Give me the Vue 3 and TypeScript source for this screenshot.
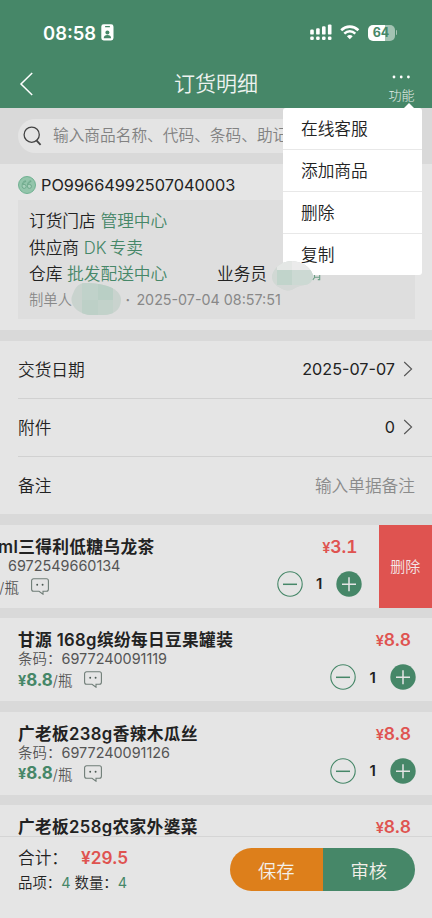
<script setup lang="ts">
interface Product {
  name: string
  code: string
  price: string
  unit: string
  qty: number
  open?: boolean
}

const menu: string[] = ['在线客服', '添加商品', '删除', '复制']

const products: Product[] = [
  { name: '500ml三得利低糖乌龙茶', code: '6972549660134', price: '3.1', unit: '瓶', qty: 1, open: true },
  { name: '甘源 168g缤纷每日豆果罐装', code: '6977240091119', price: '8.8', unit: '瓶', qty: 1 },
  { name: '广老板238g香辣木瓜丝', code: '6977240091126', price: '8.8', unit: '瓶', qty: 1 },
]
const lastProduct = { name: '广老板258g农家外婆菜', price: '8.8' }
</script>

<template>
  <div class="screen">
    <header class="header">
      <div class="status">
        <div class="clock">
          <span class="time">08:58</span>
          <svg class="badge" width="13" height="17" viewBox="0 0 13 17">
            <rect x="0.3" y="0.3" width="12.2" height="16.2" rx="2.4" fill="#fff" />
            <rect x="4" y="2" width="5" height="1.3" rx="0.6" fill="#468768" />
            <circle cx="6.4" cy="8.5" r="2" fill="#468768" />
            <path d="M2.7 14.2c0-2.2 1.5-3.3 3.7-3.3s3.7 1.1 3.7 3.3z" fill="#468768" />
          </svg>
        </div>
        <div class="signals">
          <svg width="23" height="17" viewBox="0 0 23 17" fill="#fff">
            <rect x="0.2" y="5.6" width="3.6" height="5" rx="1.2" />
            <rect x="6.1" y="4.2" width="3.6" height="6.4" rx="1.2" />
            <rect x="12" y="2.2" width="3.6" height="8.4" rx="1.2" />
            <rect x="17.9" y="0.4" width="3.6" height="10.2" rx="1.2" />
            <rect x="0.2" y="12.4" width="3.6" height="3.6" rx="1.3" />
            <rect x="6.1" y="12.4" width="3.6" height="3.6" rx="1.3" />
            <rect x="12" y="12.4" width="3.6" height="3.6" rx="1.3" />
            <rect x="17.9" y="12.4" width="3.6" height="3.6" rx="1.3" />
          </svg>
          <svg class="wifi" width="20" height="15" viewBox="0 0 20 15" fill="none" stroke="#fff">
            <path d="M1.2 5.2C6.2 0.4 13.4 0.4 18.4 5.2" stroke-width="2.6" />
            <path d="M4.3 8.6C7.5 5.6 12.1 5.6 15.3 8.6" stroke-width="2.5" />
            <path d="M6.9 11.2C8.6 9.7 11 9.7 12.7 11.2L9.8 14.2z" fill="#fff" stroke="none" />
          </svg>
          <div class="battery"><span>64</span></div>
          <i class="nub"></i>
        </div>
      </div>
      <nav class="nav">
        <svg class="back" width="15" height="24" viewBox="0 0 15 24" fill="none" stroke="#fff" stroke-width="1.5">
          <path d="M13.2 1L2 12l11.2 11" />
        </svg>
        <h1>订货明细</h1>
        <div class="more">
          <svg width="19" height="4" viewBox="0 0 19 4" fill="#fff">
            <circle cx="2" cy="2" r="1.4" /><circle cx="9.2" cy="2" r="1.4" /><circle cx="16.4" cy="2" r="1.4" />
          </svg>
          <span>功能</span>
        </div>
      </nav>
      <div class="menu">
        <div v-for="m in menu" :key="m" class="menu-item">{{ m }}</div>
      </div>
    </header>

    <main class="content">
      <div class="search-wrap">
        <div class="search">
          <svg width="20" height="20" viewBox="0 0 20 20" fill="none" stroke="#444" stroke-width="1.3">
            <circle cx="8.7" cy="8.7" r="7.6" />
            <path d="M13.2 14.2L17.6 18.8" stroke-width="1.8" />
          </svg>
          <span>输入商品名称、代码、条码、助记码</span>
        </div>
      </div>

      <section class="order">
        <div class="order-no">
          <svg width="18" height="18" viewBox="0 0 18 18">
            <circle cx="9" cy="9" r="8.5" fill="#93c5ab" stroke="#68ad8b" stroke-width="0.9" />
            <g fill="#a8d0bb" stroke="#62a181" stroke-width="0.8">
              <path d="M7.6 4.8C5.2 5.2 4.2 6.9 4.2 9.5v1.3a2 2 0 1 0 2-2.4c-.6 0-.8.1-1 .2 0-1.8.9-2.7 2.4-2.9z" />
              <path d="M12.9 4.8C10.5 5.2 9.5 6.9 9.5 9.5v1.3a2 2 0 1 0 2-2.4c-.6 0-.8.1-1 .2 0-1.8.9-2.7 2.4-2.9z" />
            </g>
          </svg>
          <span>PO99664992507040003</span>
        </div>
        <div class="order-box">
          <p>订货门店 <b>管理中心</b></p>
          <p>供应商 <b>DK<i class="thin"></i>专卖</b></p>
          <p class="split">
            <span>仓库 <b>批发配送中心</b></span>
            <span>业务员</span>
          </p>
          <p class="maker"><span>制单人</span><span class="stamp">·</span><span>2025-07-04 08:57:51</span></p>
          <svg class="mask mask-a" width="51" height="33" viewBox="0 0 51 33">
            <defs><clipPath id="ma"><path d="M1 13C4 5 7 0 14 0c18 0 36 5 36 17 0 10-8 15-18 15H18C8 31-2 23 1 13z" /></clipPath></defs>
            <g clip-path="url(#ma)">
              <rect width="51" height="33" fill="#c9d3ce" />
              <rect x="11" width="16" height="17" fill="#c0d2ca" /><rect x="27" width="15" height="17" fill="#b9cfc5" />
              <rect x="11" y="17" width="16" height="16" fill="#bdd0c7" /><rect x="27" y="17" width="15" height="16" fill="#c2d2ca" />
            </g>
          </svg>
        </div>
      </section>

      <section class="rows">
        <div class="row">
          <span>交货日期</span>
          <span class="value"><span>2025-07-07</span>
            <svg width="10" height="16" viewBox="0 0 10 16" fill="none" stroke="#555" stroke-width="1.1"><path d="M1.2 1L8.6 8L1.2 15" /></svg>
          </span>
        </div>
        <div class="row">
          <span>附件</span>
          <span class="value"><span>0</span>
            <svg width="10" height="16" viewBox="0 0 10 16" fill="none" stroke="#555" stroke-width="1.1"><path d="M1.2 1L8.6 8L1.2 15" /></svg>
          </span>
        </div>
        <div class="row">
          <span>备注</span>
          <span class="hint">输入单据备注</span>
        </div>
      </section>

      <section v-for="p in products" :key="p.code" class="product" :class="{ open: p.open }">
        <div class="body">
          <div class="info">
            <div class="name">{{ p.name }}</div>
            <div class="code">条码：<span>{{ p.code }}</span></div>
            <div class="unit">
              <strong><small>¥</small>{{ p.price }}</strong><span>/{{ p.unit }}</span>
              <svg width="18" height="17" viewBox="0 0 18 17" fill="none" stroke="#6f7d77" stroke-width="1.1">
                <path d="M2.6.7h12.8a2 2 0 0 1 2 2v8.6a2 2 0 0 1-2 2h-3.4v2.9l-4-2.9H2.6a2 2 0 0 1-2-2V2.7a2 2 0 0 1 2-2z" />
                <g fill="#4c5a54" stroke="none"><circle cx="6.2" cy="6.7" r="0.95" /><circle cx="11.6" cy="6.7" r="0.95" /></g>
              </svg>
            </div>
          </div>
          <div class="side">
            <div class="amount"><small>¥</small>{{ p.price }}</div>
            <div class="stepper">
              <svg width="26" height="26" viewBox="0 0 26 26" fill="none" stroke="#468768">
                <circle cx="13" cy="13" r="12.2" stroke-width="1.1" /><path d="M6 13.3h14" stroke-width="1.5" />
              </svg>
              <span>{{ p.qty }}</span>
              <svg width="26" height="26" viewBox="0 0 26 26">
                <circle cx="13" cy="13" r="12.7" fill="#468768" /><path d="M6 13.3h14M13 6.3v14" stroke="#e5e5e5" stroke-width="1.5" />
              </svg>
            </div>
          </div>
        </div>
        <div v-if="p.open" class="delete">删除</div>
      </section>
      <section class="product last">
        <div class="body">
          <div class="name">{{ lastProduct.name }}</div>
          <div class="amount"><small>¥</small>{{ lastProduct.price }}</div>
        </div>
      </section>
    </main>

    <svg class="mask mask-b" width="41" height="31" viewBox="0 0 41 31">
      <defs><clipPath id="mb"><path d="M0 14C3 5 11 0 20 0c10 1 18 5 21 14 0 5-2 9-8 10C22 25 21 31 13 29 5 26-1 22 0 14z" /></clipPath></defs>
      <g clip-path="url(#mb)">
        <rect width="41" height="31" fill="#d1d8d4" />
        <rect x="5" width="15" height="9" fill="#e4e7e5" /><rect x="20" width="21" height="9" fill="#ebebeb" />
        <rect x="5" y="9" width="15" height="15" fill="#c1d4cb" /><rect x="20" y="9" width="21" height="15" fill="#ccd9d3" />
        <rect y="24" width="41" height="7" fill="#d4d8d6" />
      </g>
    </svg>
    <svg class="remnant" width="9" height="6" viewBox="0 0 9 6" fill="none" stroke="#6ca087" stroke-width="1.1">
      <path d="M2.5 0v2.5L.7 5M7.7 0v4.6H5.8M3 2.3h4.5" />
    </svg>

    <footer class="footer">
      <div class="totals">
        <div class="sum">合计：<strong>¥29.5</strong></div>
        <div class="counts">品项：<em>4</em> 数量：<em>4</em></div>
      </div>
      <div class="actions">
        <button class="save">保存</button>
        <button class="audit">审核</button>
      </div>
    </footer>
  </div>
</template>

<style>
body {
  margin: 0;
  overflow: hidden;
}
</style>

<style scoped>
.screen {
  position: relative;
  display: flex;
  flex-direction: column;
  width: 432px;
  height: 918px;
  overflow: hidden;
  background: #d9d9d9;
  color: #222;
  font-family: Inter, 'Noto Sans CJK SC', sans-serif;
  font-size: 16.7px;
  font-weight: 350;
}
svg {
  display: block;
  flex: none;
}
.header {
  position: relative;
  z-index: 3;
  flex: none;
  height: 108px;
  box-sizing: border-box;
  padding-top: 20px;
  background: #468768;
  color: #fff;
}
.status {
  display: flex;
  justify-content: space-between;
  height: 25px;
  padding: 0 35px 0 43px;
  align-items: center;
}
.clock,
.signals {
  display: flex;
  align-items: center;
}
.time {
  width: 58px;
  font-size: 18.4px;
  font-weight: 600;
}
.wifi {
  margin: 0 8px 0 7px;
}
.battery {
  width: 27px;
  height: 16px;
  border-radius: 5px;
  background: linear-gradient(90deg, #fff 64%, #a3c3b3 64%);
  color: #468768;
  font-size: 12.5px;
  font-weight: 700;
  line-height: 16px;
  text-align: center;
}
.nub {
  width: 1.5px;
  height: 5px;
  margin-left: 1px;
  border-radius: 0 2px 2px 0;
  background: #a3c3b3;
}
.nav {
  display: grid;
  grid-template-columns: 60px 1fr 60px;
  height: 63px;
}
.back {
  margin: 27px 0 0 19px;
}
h1 {
  margin: 24px 0 0;
  color: #eef3f0;
  font-size: 21px;
  font-weight: 350;
  line-height: 30px;
  text-align: center;
}
.more {
  display: flex;
  flex-direction: column;
  align-items: center;
  padding: 30px 1px 0 0;
  color: #e4ede8;
  font-size: 13px;
  font-weight: 300;
  line-height: 18px;
}
.more span {
  margin-top: 7px;
}
.menu {
  position: absolute;
  top: 108px;
  left: 283px;
  width: 139px;
  border-radius: 3px;
  background: #fff;
  color: #222;
}
.menu::before {
  content: '';
  position: absolute;
  top: -5px;
  right: 8px;
  border: 5px solid transparent;
  border-top: 0;
  border-bottom-color: #fff;
}
.menu-item {
  height: 41px;
  padding-left: 18px;
  border-bottom: 1px solid #e8e8e8;
  line-height: 42px;
}
.menu-item:last-child {
  border-bottom: 0;
}
.content {
  flex: 1;
  min-height: 0;
  overflow: hidden;
}
.search-wrap {
  padding: 11px 18px;
}
.search {
  display: flex;
  align-items: center;
  height: 34px;
  padding-left: 5px;
  border-radius: 17px;
  background: #e4e4e4;
  color: #828282;
  font-size: 15.7px;
  line-height: 32px;
  white-space: nowrap;
  overflow: hidden;
}
.search span {
  margin-left: 10px;
}
.order {
  height: 165.5px;
  box-sizing: border-box;
  padding: 10px 17px 0 18px;
  background: #e5e5e5;
}
.order-no {
  display: flex;
  align-items: center;
  height: 22px;
  margin-bottom: 4px;
}
.order-no span {
  margin-left: 5px;
  font-size: 16.3px;
  font-weight: 400;
  white-space: nowrap;
}
.order-box {
  position: relative;
  height: 119px;
  box-sizing: border-box;
  padding: 8px 11px;
  background: #dedede;
}
p {
  margin: 0;
  height: 26.5px;
  line-height: 26.5px;
  white-space: nowrap;
}
b {
  color: #468768;
  font-weight: inherit;
}
.thin {
  display: inline-block;
  width: 3px;
}
.split {
  display: flex;
}
.split > span:first-child {
  width: 188px;
}
.maker {
  display: flex;
  color: #888;
  font-size: 14.3px;
  line-height: 24px;
}
.maker span:last-child {
  font-weight: 400;
}
.stamp {
  width: 11px;
  margin-left: 53.5px;
  font-weight: 600;
}
.mask-a {
  position: absolute;
  left: 53px;
  top: 83px;
}
.mask-b {
  position: absolute;
  z-index: 4;
  left: 272px;
  top: 261px;
}
.remnant {
  position: absolute;
  left: 312px;
  top: 275px;
}
.rows {
  margin-top: 11px;
  padding-left: 18px;
  background: #e5e5e5;
}
.row {
  display: flex;
  align-items: center;
  justify-content: space-between;
  height: 57px;
  padding-right: 17px;
  border-bottom: 1px solid #d1d1d1;
}
.row:last-child {
  border-bottom: 0;
}
.value {
  display: flex;
  align-items: center;
  gap: 8px;
  padding-right: 2px;
}
.value > span {
  font-size: 16.2px;
  font-weight: 400;
}
.hint {
  color: #8b8b8b;
}
.product {
  display: flex;
  height: 83px;
  margin-top: 10.5px;
  background: #e5e5e5;
  overflow: hidden;
}
.rows + .product {
  margin-top: 11px;
}
.body {
  display: flex;
  justify-content: space-between;
  flex: none;
  width: 432px;
  box-sizing: border-box;
  padding: 10px 16.5px 0 18px;
}
.open .body {
  margin-left: -53.5px;
}
.last {
  height: 40px;
}
.delete {
  flex: none;
  width: 53.5px;
  background: #df5350;
  color: #f3e6e6;
  font-size: 15px;
  line-height: 83px;
  text-align: center;
}
.info {
  white-space: nowrap;
}
.name {
  height: 21px;
  font-weight: 600;
  letter-spacing: 0.35px;
  line-height: 24px;
}
.code {
  height: 18px;
  color: #555;
  font-size: 14.5px;
  line-height: 19px;
}
.code span {
  font-size: 14.4px;
  font-weight: 400;
}
.unit {
  display: flex;
  align-items: center;
  height: 25px;
  color: #555;
  font-size: 14.5px;
}
.unit strong {
  color: #468768;
  font-size: 17px;
  font-weight: 700;
  font-variant-numeric: tabular-nums;
}
.unit svg {
  margin-left: 12px;
}
small {
  font-size: 14.5px;
}
.side {
  display: flex;
  flex-direction: column;
  align-items: flex-end;
}
.amount {
  height: 22px;
  padding-right: 4.5px;
  color: #df5350;
  font-size: 17.4px;
  font-weight: 600;
  font-variant-numeric: tabular-nums;
  line-height: 23px;
}
.stepper {
  display: flex;
  align-items: center;
  margin-top: 14px;
}
.stepper span {
  width: 33.5px;
  font-size: 15px;
  font-weight: 600;
  text-align: center;
}
.footer {
  flex: none;
  box-sizing: border-box;
  display: flex;
  justify-content: space-between;
  height: 82px;
  padding: 0 17px 0 18px;
  border-top: 1px solid #d5d5d5;
  background: #e5e5e5;
}
.sum {
  margin-top: 8px;
  line-height: 26px;
}
.sum strong {
  margin-left: 13px;
  color: #df5350;
  font-size: 17.2px;
  font-weight: 600;
}
.counts {
  font-size: 14.4px;
  line-height: 24px;
}
em {
  color: #468768;
  font-style: normal;
  font-weight: 400;
}
.actions {
  display: flex;
  width: 185px;
  height: 43px;
  margin-top: 11px;
  border-radius: 22px;
  overflow: hidden;
}
button {
  flex: 1;
  padding: 0;
  border: 0;
  color: #f3efe9;
  font: inherit;
  font-size: 18.3px;
}
.save {
  background: #dd7f1b;
}
.audit {
  background: #468768;
}
</style>
